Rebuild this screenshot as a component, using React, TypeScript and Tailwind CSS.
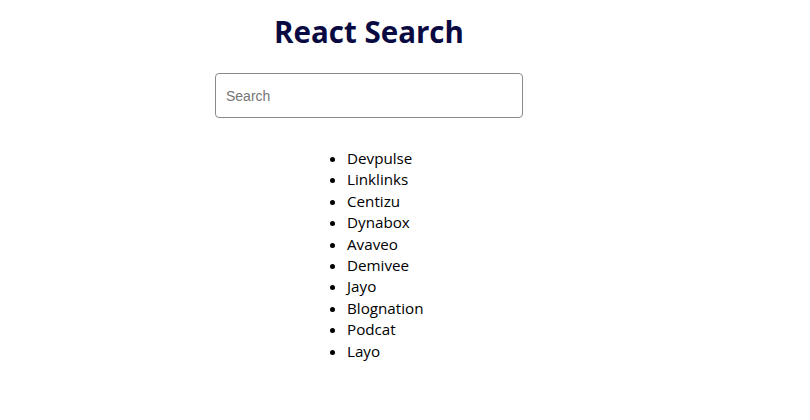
const items = [
  'Devpulse',
  'Linklinks',
  'Centizu',
  'Dynabox',
  'Avaveo',
  'Demivee',
  'Jayo',
  'Blognation',
  'Podcat',
  'Layo',
]

export default function App() {
  return (
    <div className="w-[738px] bg-white pt-[10px] font-['Open_Sans',sans-serif] text-black">
      <h1 className="text-center text-[29.5px] font-bold leading-[43px] text-[#0a0a42]">React Search</h1>
      <div className="mt-[20px] flex justify-center">
        <input
          type="text"
          placeholder="Search"
          className="h-[45px] w-[308px] rounded-[4px] border border-[#8a8a8a] px-[10px] font-['Liberation_Sans',sans-serif] text-[14px] text-black placeholder:text-[#757575] outline-none"
        />
      </div>
      <ul className="mx-auto mt-[30px] w-[78px] list-disc pl-[17px] text-[15.2px] leading-[21.4px]">
        {items.map((name) => (
          <li key={name} className="whitespace-nowrap">
            {name}
          </li>
        ))}
      </ul>
    </div>
  )
}
